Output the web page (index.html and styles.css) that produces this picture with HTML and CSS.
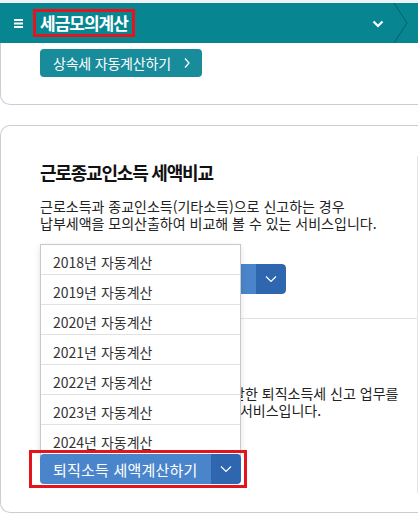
FILE: index.html
```html
<!DOCTYPE html>
<html lang="ko">
<head>
<meta charset="utf-8">
<title>세금모의계산</title>
<link rel="stylesheet" href="styles.css">
</head>
<body>
<div class="topline"></div>
<header class="bar">
  <svg class="burger" width="9" height="9" viewBox="0 0 9 9"><rect x="0" y="0" width="9" height="2" fill="#fff"/><rect x="0" y="3.5" width="9" height="2" fill="#fff"/><rect x="0" y="7" width="9" height="2" fill="#fff"/></svg>
  <h1 class="title">세금모의계산</h1>
  <svg class="bar-caret" width="12" height="8" viewBox="0 0 12 8"><path d="M1.5 1.5 L6 6 L10.5 1.5" fill="none" stroke="#fff" stroke-width="2.2"/></svg>
  <svg class="crumb" width="16" height="40" viewBox="0 0 16 40"><path d="M1 0 L14 20 L1 40" fill="none" stroke="#0a5f66" stroke-width="1"/></svg>
</header>

<section class="card card-top">
  <a class="btn-teal" href="#">상속세 자동계산하기 <svg width="8" height="12" viewBox="0 0 8 12"><path d="M2 1.5 L6 6 L2 10.5" fill="none" stroke="#fff" stroke-width="1.3"/></svg></a>
</section>

<section class="card card-main">
  <div class="panel">
    <div class="item">
      <h2 class="item-title">근로종교인소득 세액비교</h2>
      <p class="item-desc">근로소득과 종교인소득(기타소득)으로 신고하는 경우<br>납부세액을 모의산출하여 비교해 볼 수 있는 서비스입니다.</p>
      <div class="split split-wide">
        <span class="split-main">근로종교인소득 세액비교</span>
        <span class="split-toggle"><svg width="12" height="8" viewBox="0 0 12 8"><path d="M1 1.5 L6 6.5 L11 1.5" fill="none" stroke="#fff" stroke-width="1.2"/></svg></span>
      </div>
    </div>
    <div class="item item-next">
      <h2 class="item-title">퇴직소득 세액계산</h2>
      <p class="item-desc"><span class="nowrap">퇴직소득 세액을 자동계산하여 일괄한 퇴직소득세 신고 업무를</span><br><span class="nowrap">간편하게 처리할 수 있게 도와주는 서비스입니다.</span></p>
      <div class="split-wrap">
        <ul class="menu">
          <li class="menu-item">2018년 자동계산</li>
          <li class="menu-item">2019년 자동계산</li>
          <li class="menu-item">2020년 자동계산</li>
          <li class="menu-item">2021년 자동계산</li>
          <li class="menu-item">2022년 자동계산</li>
          <li class="menu-item">2023년 자동계산</li>
          <li class="menu-item">2024년 자동계산</li>
        </ul>
        <div class="split split-narrow">
          <span class="split-main">퇴직소득 세액계산하기</span>
          <span class="split-toggle"><svg width="12" height="8" viewBox="0 0 12 8"><path d="M1 1.5 L6 6.5 L11 1.5" fill="none" stroke="#fff" stroke-width="1.2"/></svg></span>
        </div>
      </div>
    </div>
  </div>
</section>
</body>
</html>
```

FILE: styles.css
```css
* { box-sizing: border-box; }
html, body { margin: 0; padding: 0; }
body {
  width: 418px;
  height: 531px;
  overflow: hidden;
  background: #fff;
  font-family: "Noto Sans CJK KR", "Noto Sans", sans-serif;
  color: #111;
}
.topline { height: 3px; background: #eef3f5; }

.bar {
  height: 40px;
  background: #078691;
  display: flex;
  align-items: center;
  padding-left: 14px;
}
.burger { display: block; margin-top: 1px; }
.title {
  margin: 0 0 0 10px;
  height: 28px;
  padding: 0 4px;
  border: 3px solid #e3141b;
  color: #fff;
  font-size: 17px;
  font-weight: 700;
  line-height: 22px;
  letter-spacing: -1px;
}
.bar-caret { margin-left: auto; margin-right: 9px; margin-top: 1px; }
.crumb { display: block; margin-right: 9px; }

.card {
  border-left: 1px solid #c7ced6;
  background: #fff;
}
.card-top {
  padding: 6px 0 27px 39px;
  border-bottom: 1px solid #c7ced6;
  border-bottom-left-radius: 10px;
}
.btn-teal {
  display: inline-flex;
  align-items: center;
  gap: 12px;
  height: 28px;
  padding: 0 11px 0 13px;
  background: #188c9b;
  border-radius: 4px;
  color: #fff;
  text-decoration: none;
  font-size: 14px;
  letter-spacing: -0.2px;
  white-space: nowrap;
}

.card-main {
  margin-top: 20px;
  border-top: 1px solid #c7ced6;
  border-bottom: 1px solid #c7ced6;
  border-top-left-radius: 10px;
  border-bottom-left-radius: 10px;
  padding: 30px 0 19px;
}
.panel {
  border-right: 1px solid #e3e6e8;
  padding-bottom: 9px;
}
.item { padding: 5px 0 24px 39px; }
.item-next {
  border-top: 1px solid #e3e3e3;
  margin-left: 39px;
  padding: 29px 0 0 0;
}
.item-title {
  margin: 0;
  font-size: 18px;
  font-weight: 700;
  line-height: 22px;
  letter-spacing: -1.2px;
  color: #111;
}
.item-desc {
  margin: 15px 0 0;
  font-size: 14px;
  line-height: 17px;
  letter-spacing: 0;
  color: #222;
}
.nowrap { white-space: nowrap; }

.split {
  display: flex;
  height: 30px;
  border-radius: 4px;
  color: #fff;
  font-size: 15px;
}
.split-wide { width: 246px; margin-top: 32px; overflow: hidden; }
.split-narrow { width: 201px; position: relative; z-index: 2; }
.split-main {
  flex: 1;
  background: #4a85cb;
  display: flex;
  align-items: center;
  padding-left: 13px;
  letter-spacing: 0.2px;
  white-space: nowrap;
  border-radius: 4px 0 0 4px;
}
.split-toggle {
  width: 30px;
  background: #2e66b0;
  display: flex;
  align-items: center;
  justify-content: center;
  border-radius: 0 4px 4px 0;
}
.split-narrow::after {
  content: "";
  position: absolute;
  left: -11px;
  right: -6px;
  top: -4px;
  bottom: -4px;
  border: 3px solid #e3141b;
}

.split-wrap { position: relative; margin-top: 35px; }
.menu {
  position: absolute;
  left: 0;
  bottom: 100%;
  margin: 0 0 -2px;
  padding: 0;
  list-style: none;
  width: 201px;
  background: #fff;
  border: 1px solid #c8c8c8;
  box-shadow: 0 2px 6px rgba(0,0,0,0.12);
  z-index: 1;
}
.menu-item {
  height: 30px;
  padding: 4px 0 0 12px;
  display: flex;
  align-items: center;
  border-bottom: 1px solid #e2e2e2;
  font-size: 14px;
  color: #333;
  letter-spacing: 0;
}
.menu-item:last-child { border-bottom: none; }
```
